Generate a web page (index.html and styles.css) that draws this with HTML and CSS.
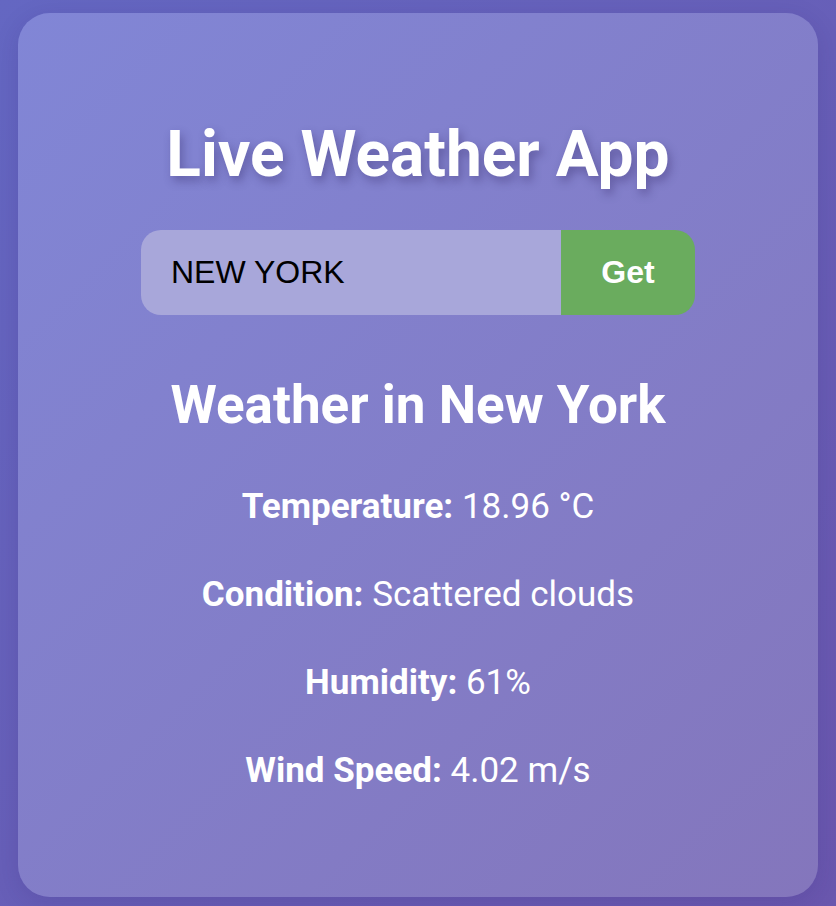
FILE: index.html
```html
<!DOCTYPE html>
<html lang="en">
<head>
    <meta charset="UTF-8">
    <meta name="viewport" content="width=device-width, initial-scale=1.0">
    <title>Live Weather App</title>
    <link rel="stylesheet" href="styles.css">
</head>
<body>
    <div class="card">
        <h1>Live Weather App</h1>
        <form class="search" onsubmit="return false;">
            <input type="text" id="city" value="NEW YORK">
            <button type="submit" class="btn">Get</button>
        </form>
        <div class="weather">
            <h2>Weather in New York</h2>
            <div class="details">
                <p><strong>Temperature:</strong> 18.96 °C</p>
                <p><strong>Condition:</strong> Scattered clouds</p>
                <p><strong>Humidity:</strong> 61%</p>
                <p><strong>Wind Speed:</strong> 4.02 m/s</p>
            </div>
        </div>
    </div>
</body>
</html>
```

FILE: styles.css
```css
body, html {
    margin: 0;
    padding: 0;
    font-family: Roboto, "Liberation Sans", Arial, sans-serif;
    color: #fff;
}

body {
    min-height: 906px;
    background: linear-gradient(135deg, #6467c2, #6a57ae);
    padding: 13px 18px 10px;
    box-sizing: border-box;
}

.card {
    background: linear-gradient(135deg, #8186d6, #8476bc);
    border-radius: 32px;
    box-shadow: 0 6px 24px rgba(40, 30, 110, 0.15);
    padding: 104px 0 105px;
    text-align: center;
}

.card h1 {
    margin: 0;
    font-size: 64px;
    line-height: 76px;
    font-weight: 700;
    text-shadow: 3px 5px 10px rgba(40, 30, 90, 0.35);
}

.search {
    display: flex;
    justify-content: center;
    margin-top: 37px;
}

.search input {
    width: 420px;
    box-sizing: border-box;
    padding: 24px 30px 25px;
    border: none;
    border-radius: 20px 0 0 20px;
    background: #a8a7da;
    color: #000;
    font-family: "Liberation Sans", Arial, sans-serif;
    font-size: 32px;
    line-height: 36px;
    outline: none;
}

.search .btn {
    width: 134px;
    padding: 24px 0 25px;
    border: none;
    border-radius: 0 20px 20px 0;
    background: #6aac5e;
    color: #fff;
    font-family: "Liberation Sans", Arial, sans-serif;
    font-size: 32px;
    line-height: 36px;
    font-weight: 700;
    cursor: pointer;
}

.weather h2 {
    margin: 58px 0 0;
    font-size: 53px;
    line-height: 64px;
    font-weight: 700;
}

.details {
    display: flex;
    flex-direction: column;
    gap: 46px;
    margin-top: 49px;
}

.details p {
    margin: 0;
    font-size: 35px;
    line-height: 42px;
}

.details strong {
    font-weight: 700;
}
```
